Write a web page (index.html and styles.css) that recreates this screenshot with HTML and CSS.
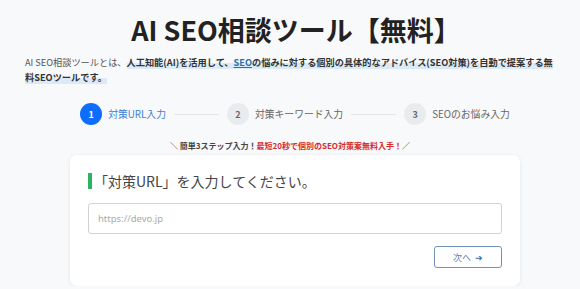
FILE: index.html
```html
<!DOCTYPE html>
<html lang="ja">
<head>
<meta charset="utf-8">
<link rel="stylesheet" href="styles.css">
</head>
<body>
<main class="page">
  <h1 class="title">AI SEO相談ツール【無料】</h1>
  <p class="lead">AI SEO相談ツールとは、<span class="mark">人工知能(AI)を活用して、<a class="link">SEO</a>の悩みに対する個別の具体的なアドバイス(SEO対策)を自動で提案する無料SEOツールです。</span></p>

  <div class="steps">
    <div class="step active"><span class="num">1</span><span class="label">対策URL入力</span></div>
    <span class="line"></span>
    <div class="step"><span class="num">2</span><span class="label">対策キーワード入力</span></div>
    <span class="line"></span>
    <div class="step"><span class="num">3</span><span class="label">SEOのお悩み入力</span></div>
  </div>

  <p class="catch">＼ 簡単3ステップ入力！<span class="red">最短20秒で個別のSEO対策案無料入手！</span>／</p>

  <section class="card">
    <h2 class="card-title">「対策URL」を入力してください。</h2>
    <input class="url" type="text" placeholder="https://devo.jp">
    <div class="actions">
      <button class="next" type="button">次へ <span class="arrow">➔</span></button>
    </div>
  </section>
</main>
</body>
</html>
```
FILE: styles.css
```css
* { box-sizing: border-box; }
html, body { margin: 0; padding: 0; }
body {
  background: #f8f9fa;
  font-family: "Noto Sans CJK JP", "Noto Sans", sans-serif;
  color: #444;
}
.page { padding-top: 13px; }
.title {
  margin: 0;
  text-align: center;
  font-size: 27px;
  line-height: 34px;
  font-weight: 700;
  color: #222;
  padding-left: 12px;
}
.lead {
  margin: 8px 0 0;
  padding: 0 20px 0 25px;
  font-size: 9.2px;
  line-height: 14.5px;
  color: #555;
}
.mark {
  font-weight: 700;
  color: #333;
  background: linear-gradient(transparent 55%, #dbeaf7 55%);
}
.link { color: #2a6fb0; text-decoration: underline; }
.steps {
  display: flex;
  align-items: center;
  justify-content: center;
  gap: 8px;
  margin-top: 19px;
  padding-left: 10px;
}
.step { display: flex; align-items: center; gap: 6px; }
.num {
  width: 22px; height: 22px;
  border-radius: 50%;
  background: #e9ecef;
  color: #666;
  font-size: 9px;
  font-weight: 700;
  display: flex; align-items: center; justify-content: center;
}
.label { font-size: 9.8px; color: #666; }
.active .num { background: #0d6efd; color: #fff; }
.active .label { color: #3d7fd6; }
.line { width: 45px; height: 1px; background: #e3e5e8; }
.catch {
  margin: 16px 0 0;
  text-align: center;
  font-size: 8px;
  line-height: 10px;
  font-weight: 700;
  color: #444;
}
.red { color: #d62a2a; }
.card {
  margin: 4px 60px 0 70px;
  background: #fff;
  border-radius: 7px;
  box-shadow: 0 1px 4px rgba(0,0,0,0.08);
  padding: 18px;
}
.card-title {
  margin: 0;
  font-size: 14px;
  line-height: 16px;
  font-weight: 400;
  color: #444;
  border-left: 4px solid #28b463;
  padding-left: 2px;
}
.url {
  display: block;
  width: 100%;
  height: 31px;
  margin-top: 14px;
  border: 1px solid #cfd3d7;
  border-radius: 3px;
  padding: 0 9px;
  font-family: "Noto Sans", sans-serif;
  font-size: 9.5px;
  color: #333;
  background: #fff;
}
.url::placeholder { color: #aaa; }
.actions { display: flex; justify-content: flex-end; margin-top: 12px; }
.next {
  width: 68px; height: 22px;
  border: 1px solid #6f93b8;
  border-radius: 3px;
  background: #fff;
  color: #5b84b8;
  font-family: "Noto Sans CJK JP", sans-serif;
  font-size: 9px;
  padding: 0;
}
.arrow { color: #3a6fb5; font-size: 9px; margin-left: 2px; }
```
